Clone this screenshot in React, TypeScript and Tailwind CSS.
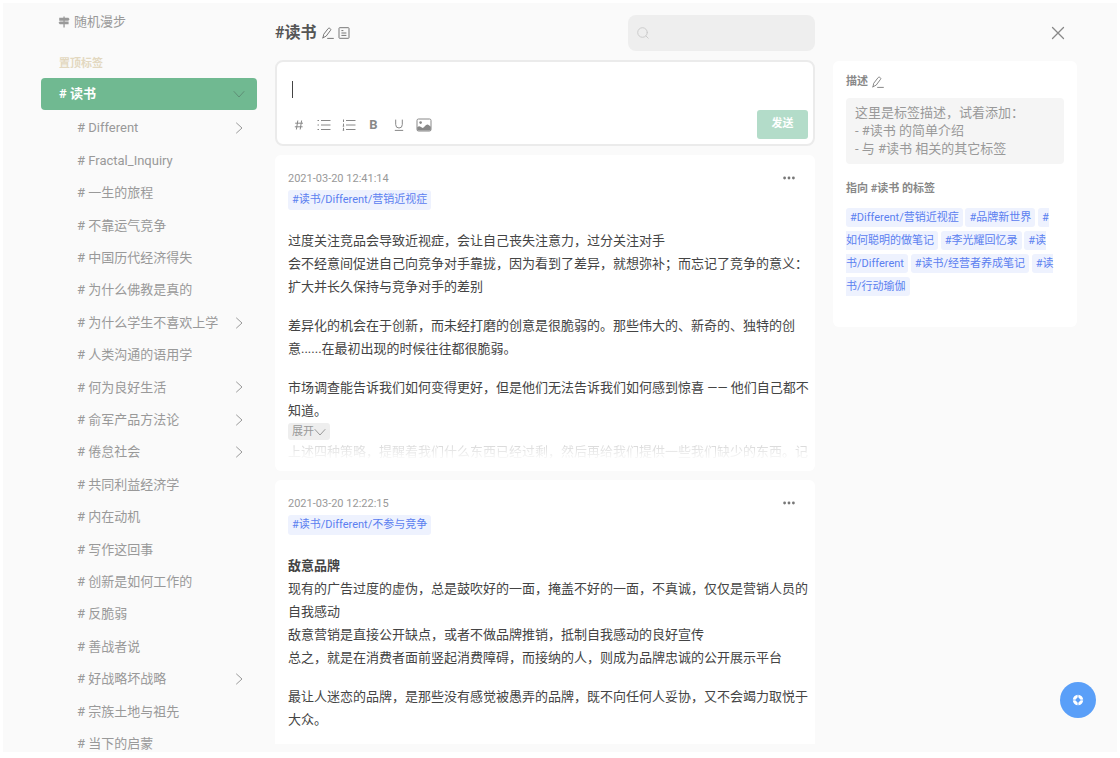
import React from 'react';

const sidebarTags = [
  { name: 'Different', hasChildren: true },
  { name: 'Fractal_Inquiry' },
  { name: '一生的旅程' },
  { name: '不靠运气竞争' },
  { name: '中国历代经济得失' },
  { name: '为什么佛教是真的' },
  { name: '为什么学生不喜欢上学', hasChildren: true },
  { name: '人类沟通的语用学' },
  { name: '何为良好生活', hasChildren: true },
  { name: '俞军产品方法论', hasChildren: true },
  { name: '倦怠社会', hasChildren: true },
  { name: '共同利益经济学' },
  { name: '内在动机' },
  { name: '写作这回事' },
  { name: '创新是如何工作的' },
  { name: '反脆弱' },
  { name: '善战者说' },
  { name: '好战略坏战略', hasChildren: true },
  { name: '宗族土地与祖先' },
  { name: '当下的启蒙' },
];

const linkedTags = [
  '#Different/营销近视症',
  '#品牌新世界',
  '#如何聪明的做笔记',
  '#李光耀回忆录',
  '#读书/Different',
  '#读书/经营者养成笔记',
  '#读书/行动瑜伽',
];

const Chevron = ({ className = '' }: { className?: string }) => (
  <svg viewBox="0 0 12 12" className={className} fill="none" stroke="currentColor" strokeLinecap="round" strokeLinejoin="round">
    <path d="M3.5 1 L9 6 L3.5 11" />
  </svg>
);

const PencilIcon = ({ className = '' }: { className?: string }) => (
  <svg viewBox="0 0 12 12" className={className} fill="none" stroke="currentColor" strokeLinejoin="round" strokeLinecap="round">
    <path d="M1 10.8 L1.7 7.3 L6.2 1.5 Q6.9 0.7 7.8 1.3 L8.3 1.7 Q9.2 2.4 8.6 3.2 L4.2 9.1 L1 10.8 Z M5.6 11.4 H11.4" />
  </svg>
);

const MoreButton = () => (
  <button aria-label="更多" className="text-[#777]">
    <svg viewBox="0 0 12 4" className="h-1 w-3" fill="currentColor">
      <circle cx="1.6" cy="2" r="1.4" />
      <circle cx="6" cy="2" r="1.4" />
      <circle cx="10.4" cy="2" r="1.4" />
    </svg>
  </button>
);

const TagLink = ({ children }: { children: React.ReactNode }) => (
  <a href="#" className="rounded-[3px] bg-[#eef2fe] px-1 py-[3px] text-[11px] text-[#5b80f0]">
    {children}
  </a>
);

const Sidebar = () => (
  <nav className="flex w-[216px] shrink-0 flex-col pt-2 text-[13px] text-[#999]">
    <a href="#" className="flex h-[22px] shrink-0 items-center gap-1 pl-[17px]">
      <svg viewBox="0 0 12 12" className="size-3" fill="currentColor">
        <path d="M5.4 0.5 H6.7 V1.8 H10.4 L11.6 3.2 L10.4 4.7 H6.7 V5.4 H10.6 V8.2 H6.7 V11.5 H5.4 V8.2 H1.8 L0.5 6.8 L1.8 5.4 H5.4 V4.7 H1.2 V1.8 H5.4 Z" />
      </svg>
      随机漫步
    </a>
    <h2 className="mt-[21px] h-5 shrink-0 pl-[18px] text-[11px] leading-5 font-bold text-[#e3d8c0]">置顶标签</h2>
    <a href="#" className="mt-1 flex h-8 shrink-0 items-center justify-between rounded bg-[#70b991] pr-3 pl-[18px] font-bold text-white">
      # 读书
      <Chevron className="size-3 rotate-90 text-[#5f8f76]" />
    </a>
    <ul className="mt-0.5 -mb-2 grid flex-1 auto-rows-fr">
      {sidebarTags.map((tag) => (
        <li key={tag.name} className="min-h-0">
          <a href="#" className="flex h-full items-center justify-between pr-3 pl-9">
            # {tag.name}
            {tag.hasChildren && <Chevron className="size-3" />}
          </a>
        </li>
      ))}
    </ul>
  </nav>
);

const Editor = () => (
  <form className="mt-[9px] shrink-0 rounded-lg border-2 border-[#ebebeb] bg-white pt-[19px] pr-[5px] pb-[5px] pl-[9px]">
    <div className="pr-3 pl-1.5">
      <textarea
        aria-label="笔记内容"
        rows={1}
        className="block h-[17px] w-full resize-none border-l border-[#444] pl-1 text-[13px] leading-[17px] outline-none"
      />
    </div>
    <div className="mt-3 flex items-center text-[#888]">
      <button type="button" aria-label="标签" className="flex w-[25px] justify-center">
        <svg viewBox="0 0 12 12" className="size-3" fill="none" stroke="currentColor">
          <path d="M4.8 1.5 L3.4 10.5 M8.6 1.5 L7.2 10.5 M2.2 4.2 H10 M1.8 7.8 H9.6" />
        </svg>
      </button>
      <button type="button" aria-label="无序列表" className="flex w-[25px] justify-center">
        <svg viewBox="0 0 14 12" className="h-3 w-3.5" fill="none" stroke="currentColor">
          <path d="M0.5 1.5 H2 M0.5 6 H2 M0.5 10.5 H2 M4 1.5 H13.5 M4 6 H13.5 M4 10.5 H13.5" />
        </svg>
      </button>
      <button type="button" aria-label="有序列表" className="flex w-[25px] justify-center">
        <svg viewBox="0 0 14 12" className="h-3 w-3.5" fill="none" stroke="currentColor">
          <path d="M1.5 0.5 V3 M1.5 4.6 V7.2 M0.7 7.2 H2.2 M1.5 8.8 V11.4 M0.7 11.2 H2.2 M4 1.5 H13.5 M4 6 H13.5 M4 10.5 H13.5" />
        </svg>
      </button>
      <button type="button" aria-label="加粗" className="w-[25px] text-center text-[13px] font-bold">
        B
      </button>
      <button type="button" aria-label="下划线" className="flex w-[25px] justify-center">
        <svg viewBox="0 0 12 12" className="size-3" fill="none" stroke="currentColor">
          <path d="M2.7 0.6 V5.6 Q2.7 9 6 9 Q9.3 9 9.3 5.6 V0.6 M1.8 11.4 H10.2" />
        </svg>
      </button>
      <button type="button" aria-label="图片" className="flex w-[25px] justify-center">
        <svg viewBox="0 0 16 14" className="h-3.5 w-4" fill="none">
          <rect x="1" y="1" width="14" height="12" rx="1.5" stroke="currentColor" />
          <circle cx="4.6" cy="4.6" r="1.3" fill="currentColor" />
          <path d="M1.2 12.6 V9.3 Q3.2 7.6 4.6 8.8 L6.6 10 Q8 9.4 9 8 Q11 5.4 13 7.2 L14.8 8.8 V12.6 Z" fill="currentColor" />
        </svg>
      </button>
      <button type="submit" className="ml-auto h-[29px] w-[51px] rounded-[3px] bg-[#b3dcc9] text-[11px] font-bold text-white">
        发送
      </button>
    </div>
  </form>
);

type MemoProps = {
  time: string;
  tag: string;
  children: React.ReactNode;
};

const Memo = ({ time, tag, children }: MemoProps) => (
  <article className="shrink-0 rounded-md bg-white pt-[14px] pr-1.5 pb-2 pl-[13px] text-[13px] leading-[23px] text-[#444] last:grow last:rounded-b-none">
    <div className="flex h-[18px] items-center justify-between pr-[14px] text-[11px] text-[#999]">
      <time>{time}</time>
      <MoreButton />
    </div>
    <div className="mt-[3px] flex h-5 items-center leading-[14px]">
      <TagLink>{tag}</TagLink>
    </div>
    <div className="mt-[19px] flex flex-col gap-4">{children}</div>
  </article>
);

const TagPanel = () => (
  <aside className="w-[244px] shrink-0 pt-3">
    <div className="flex h-9 items-center justify-end pr-3">
      <button aria-label="关闭" className="text-[#888]">
        <svg viewBox="0 0 14 14" className="size-3.5" fill="none" stroke="currentColor" strokeWidth="1.3" strokeLinecap="round">
          <path d="M1.5 1.5 L12.5 12.5 M12.5 1.5 L1.5 12.5" />
        </svg>
      </button>
    </div>
    <section className="mt-[10px] rounded-md bg-white px-[13px] pt-3 pb-[29px]">
      <h3 className="flex h-[18px] items-center gap-1 text-[11px] font-bold text-[#888]">
        描述
        <button aria-label="编辑描述">
          <PencilIcon className="size-3" />
        </button>
      </h3>
      <p className="mt-[7px] rounded bg-[#f5f5f5] px-[9px] py-[6px] text-[13px] leading-[18px] text-[#999]">
        这里是标签描述，试着添加：
        <br />- #读书 的简单介绍
        <br />- 与 #读书 相关的其它标签
      </p>
      <h3 className="mt-4 h-[18px] text-[11px] leading-[18px] font-bold text-[#888]">指向 #读书 的标签</h3>
      <p className="mt-2 pr-2 text-[11px] leading-[23px]">
        {linkedTags.map((tag) => (
          <React.Fragment key={tag}>
            <TagLink>{tag}</TagLink>{' '}
          </React.Fragment>
        ))}
      </p>
    </section>
  </aside>
);

const App: React.FC = () => {
  return (
    <div
      lang="zh-CN"
      className="h-screen bg-white px-[3px] pt-[3px] pb-1.5 font-[Roboto,'Noto_Sans_CJK_SC',sans-serif]"
    >
      <div className="flex h-full gap-[18px] overflow-hidden bg-[#fafafa] pr-10 pl-[38px]">
        <Sidebar />

        <main className="flex min-w-0 flex-1 flex-col pt-3 pb-2">
          <header className="flex h-9 shrink-0 items-center text-[#777]">
            <h1 className="text-base font-bold text-[#555]">#读书</h1>
            <button aria-label="重命名标签" className="ml-1.5">
              <PencilIcon className="size-3" />
            </button>
            <button aria-label="标签描述" className="ml-1">
              <svg viewBox="0 0 12 12" className="size-3" fill="none" stroke="currentColor">
                <rect x="1" y="0.7" width="10" height="10.6" rx="0.6" />
                <path d="M3.4 3.6 H5.4 M3.4 6 H8.4 M3.4 8.4 H8.4" />
              </svg>
            </button>
            <label className="ml-auto flex h-full w-[187px] items-center rounded-lg bg-[#eee] px-[9px]">
              <svg viewBox="0 0 12 12" className="size-3 shrink-0 text-[#ccc]" fill="none" stroke="currentColor" strokeLinecap="round">
                <circle cx="5.5" cy="5.5" r="4.8" />
                <path d="M9 9 L11.2 11.2" />
              </svg>
              <input type="search" aria-label="搜索" className="ml-2 w-full min-w-0 bg-transparent text-[13px] outline-none" />
            </label>
          </header>

          <Editor />

          <div className="mt-[9px] flex min-h-0 flex-1 flex-col gap-[9px] overflow-hidden">
            <Memo time="2021-03-20 12:41:14" tag="#读书/Different/营销近视症">
              <p>
                过度关注竞品会导致近视症，会让自己丧失注意力，过分关注对手
                <br />
                会不经意间促进自己向竞争对手靠拢，因为看到了差异，就想弥补；而忘记了竞争的意义：扩大并长久保持与竞争对手的差别
              </p>
              <p>
                差异化的机会在于创新，而未经打磨的创意是很脆弱的。那些伟大的、新奇的、独特的创
                <br />
                意......在最初出现的时候往往都很脆弱。
              </p>
              <div>
                <p>
                  市场调查能告诉我们如何变得更好，但是他们无法告诉我们如何感到惊喜 —— 他们自己都不知道。
                </p>
                <button className="mt-px flex h-[17px] items-center rounded-[3px] bg-[#eee] px-1 text-[11px] text-[#999]">
                  展开
                  <Chevron className="size-3 rotate-90" />
                </button>
                <p className="h-[23px] overflow-hidden bg-linear-to-b from-[#ccc] to-white to-90% bg-clip-text text-transparent">
                  上述四种策略，提醒着我们什么东西已经过剩，然后再给我们提供一些我们缺少的东西。记
                </p>
              </div>
            </Memo>

            <Memo time="2021-03-20 12:22:15" tag="#读书/Different/不参与竞争">
              <p>
                <strong>敌意品牌</strong>
                <br />
                现有的广告过度的虚伪，总是鼓吹好的一面，掩盖不好的一面，不真诚，仅仅是营销人员的自我感动
                <br />
                敌意营销是直接公开缺点，或者不做品牌推销，抵制自我感动的良好宣传
                <br />
                总之，就是在消费者面前竖起消费障碍，而接纳的人，则成为品牌忠诚的公开展示平台
              </p>
              <p>最让人迷恋的品牌，是那些没有感觉被愚弄的品牌，既不向任何人妥协，又不会竭力取悦于大众。</p>
            </Memo>
          </div>
        </main>

        <TagPanel />
      </div>

      {/* Floating help button */}
      <button
        aria-label="帮助"
        className="fixed right-6 bottom-10 flex size-9 items-center justify-center rounded-full bg-[#5a9ff8] text-white"
      >
        <svg viewBox="0 0 12 12" className="size-3">
          <circle cx="6" cy="6" r="5.2" fill="currentColor" />
          <path d="M6 2.6 Q6.8 5.2 9.4 6 Q6.8 6.8 6 9.4 Q5.2 6.8 2.6 6 Q5.2 5.2 6 2.6 Z" fill="#5a9ff8" />
          <circle cx="6" cy="6" r="2" fill="#5a9ff8" />
          <path d="M6 0.6 V2.6 M6 9.4 V11.4 M0.6 6 H2.6 M9.4 6 H11.4" stroke="#5a9ff8" strokeWidth="0.8" />
        </svg>
      </button>
    </div>
  );
};

export default App;
